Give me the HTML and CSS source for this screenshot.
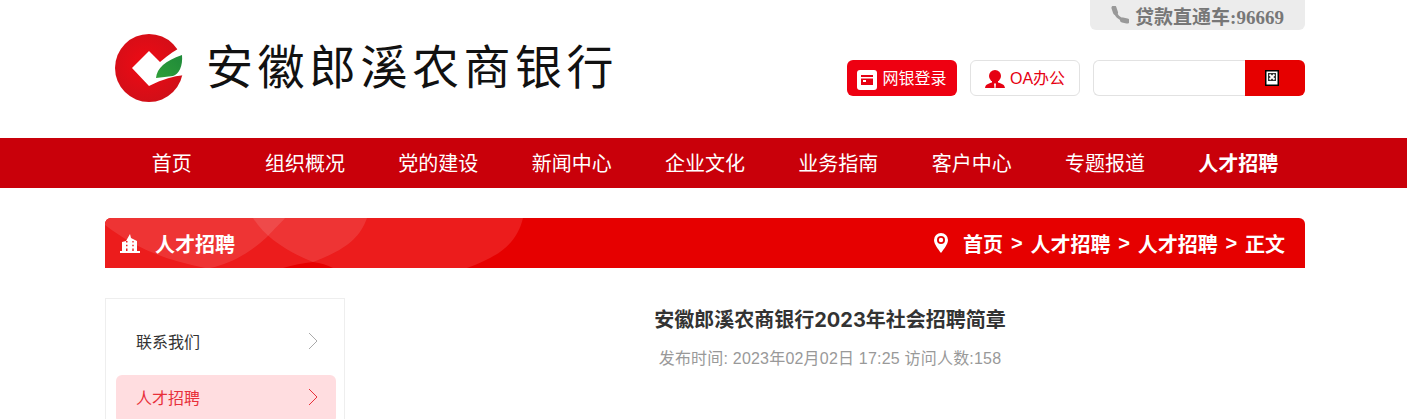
FILE: index.html
```html
<!DOCTYPE html>
<html lang="zh-CN">
<head>
<meta charset="utf-8">
<title>安徽郎溪农商银行</title>
<link rel="stylesheet" href="styles.css">
</head>
<body>
<header class="header">
  <a class="logo" href="#">
    <svg class="logo-mark" viewBox="0 0 68 68" aria-hidden="true">
      <defs>
        <radialGradient id="red" cx="45%" cy="45%" r="60%"><stop offset="0" stop-color="#f00a14"/><stop offset="1" stop-color="#cf0f18"/></radialGradient>
        <linearGradient id="leaf" x1="0" y1="1" x2="1" y2="0"><stop offset="0" stop-color="#2f9e38"/><stop offset="1" stop-color="#1f8a3a"/></linearGradient>
      </defs>
      <circle cx="34" cy="34" r="34" fill="url(#red)"/>
      <path d="M17 34 34 17 45 28C50 24 58 17 70 11V41C60 42 50 44 34 52Z" fill="#fff"/>
      <path d="M41 44C42 34 50 27 67 21 68 32 64 40 58 42 52 43 47 43 41 44Z" fill="url(#leaf)"/>
    </svg>
    <span class="logo-text">安徽郎溪农商银行</span>
  </a>
  <div class="header-side">
    <div class="tel">
      <svg class="tel-icon" viewBox="0 0 18 18" aria-hidden="true"><path d="M4 4C4 9 8.500 13.500 14 14" fill="none" stroke="#999" stroke-width="3"/><path d="M3 2 4.500 6.500M11.500 14 16 15" fill="none" stroke="#999" stroke-width="5" stroke-linecap="round"/></svg>
      <span>贷款直通车:96669</span>
    </div>
    <div class="tools">
      <a class="tool tool-primary" href="#">
        <svg class="tool-icon" viewBox="0 0 20 20" aria-hidden="true"><rect width="20" height="20" rx="3" fill="#fff"/><rect x="4" y="5" width="12" height="10" fill="#e60012"/><rect x="4" y="7" width="12" height="1.500" fill="#fff"/><rect x="6" y="10" width="3" height="2" fill="#fff"/></svg>
        <span class="tool-label">网银登录</span>
      </a>
      <a class="tool tool-outline" href="#">
        <svg class="tool-icon" viewBox="0 0 20 20" aria-hidden="true"><circle cx="10" cy="6" r="6" fill="#e60012"/><path d="M7 10h6v2.500c3 1 6.500 1.500 7 5.500H0c.5-4 4-4.500 7-5.500Z" fill="#e60012"/><path d="M9 13.500h2l-.5 4.500h-1Z" fill="#fff"/></svg>
        <span class="tool-label">OA办公</span>
      </a>
      <form class="search">
        <input class="search-input" type="text" aria-label="搜索">
        <button class="search-btn" type="button" aria-label="搜索">
          <svg class="broken" viewBox="0 0 14 16" aria-hidden="true"><rect width="14" height="16" fill="#000"/><rect x="1.500" y="1.500" width="11" height="13" fill="#fff"/><rect x="3" y="3" width="8" height="8" fill="#333"/><path d="M4.500 4.500l5 5M9.500 4.500l-5 5" stroke="#fff" stroke-width="1.800"/></svg>
        </button>
      </form>
    </div>
  </div>
</header>

<nav class="nav">
  <ul class="nav-list">
    <li><a href="#">首页</a></li>
    <li><a href="#">组织概况</a></li>
    <li><a href="#">党的建设</a></li>
    <li><a href="#">新闻中心</a></li>
    <li><a href="#">企业文化</a></li>
    <li><a href="#">业务指南</a></li>
    <li><a href="#">客户中心</a></li>
    <li><a href="#">专题报道</a></li>
    <li class="active"><a href="#">人才招聘</a></li>
  </ul>
</nav>

<section class="banner">
  <svg class="banner-bg" viewBox="0 0 420 50" aria-hidden="true">
    <path d="M0 0H418C412 25 395 38 362 50H228C222 47 216 45 208 44 198 45 188 47 178 50H0Z" fill="#ec1c1c"/>
    <path d="M0 7C30 30 60 42 100 50H105C130 45 150 30 162 19 170 10 176 5 180 0H0Z" fill="#fff" fill-opacity=".11"/>
    <path d="M148 0C160 20 185 35 208 44 240 32 255 20 262 0Z" fill="#fff" fill-opacity=".11"/>
  </svg>
  <h2 class="banner-title">
    <svg class="banner-icon" viewBox="0 0 20 19" aria-hidden="true"><path d="M0 17H2V8L6 7 10 0 11 4 17 7V17H20V19H0ZM6 7V8.500H7.500V7ZM12.300 7V8.500H13.700V7ZM6 10.700V12.300H7.500V10.700ZM12.300 10.700V12.300H13.700V10.700ZM6 14.500V17H7.500V14.500ZM12.300 14.500V17H13.700V14.500Z" fill="#fff" fill-rule="evenodd"/></svg>
    人才招聘
  </h2>
  <div class="crumbs">
    <svg class="pin" viewBox="0 0 16 20" aria-hidden="true"><path d="M8 0a7 7 0 0 1 7 7c0 4-4 9-7 13C5 16 1 11 1 7a7 7 0 0 1 7-7Z" fill="#fff"/><circle cx="8" cy="7" r="4" fill="#e60000"/><circle cx="8" cy="7" r="2.200" fill="#fff"/></svg>
    <a href="#">首页</a><i>&gt;</i><a href="#">人才招聘</a><i>&gt;</i><a href="#">人才招聘</a><i>&gt;</i><span>正文</span>
  </div>
</section>

<main class="main">
  <aside class="side">
    <a class="side-item" href="#">联系我们<svg class="chev" viewBox="0 0 10 18" aria-hidden="true"><path d="M1 1l8 8-8 8" fill="none" stroke="currentColor"/></svg></a>
    <a class="side-item current" href="#">人才招聘<svg class="chev" viewBox="0 0 10 18" aria-hidden="true"><path d="M1 1l8 8-8 8" fill="none" stroke="currentColor"/></svg></a>
  </aside>
  <article class="article">
    <h1 class="article-title">安徽郎溪农商银行2023年社会招聘简章</h1>
    <p class="article-meta">发布时间: 2023年02月02日 17:25 访问人数:158</p>
  </article>
</main>
</body>
</html>
```

FILE: styles.css
```css
* { box-sizing: border-box; }
html, body { margin: 0; padding: 0; height: 419px; overflow: hidden; background: #fff; }
body { font-family: "Liberation Sans", "Noto Sans CJK SC", sans-serif; color: #333; }
a { color: inherit; text-decoration: none; }
ul { list-style: none; margin: 0; padding: 0; }

.header { display: flex; justify-content: space-between; width: 1200px; height: 138px; margin-left: 105px; }
.logo { display: flex; align-items: center; height: 68px; margin: 34px 0 0 10px; color: #111; }
.logo-mark { width: 68px; height: 68px; flex: none; }
.logo-text { margin-left: 23px; font-size: 47px; line-height: 68px; letter-spacing: 4.5px; font-weight: 400; }
.header-side { display: flex; flex-direction: column; align-items: flex-end; }
.tel { display: flex; align-items: center; justify-content: center; gap: 6px; width: 215px; height: 30px; background: #ececec; border-radius: 0 0 6px 6px; color: #777; font-family: "Liberation Serif", "Noto Sans CJK SC", serif; font-size: 19px; font-weight: 700; }
.tel-icon { width: 18px; height: 18px; }
.tools { display: flex; gap: 13px; margin-top: 30px; }
.tool { display: flex; align-items: center; justify-content: center; gap: 5px; width: 110px; height: 36px; border-radius: 6px; font-size: 16px; }
.tool-primary { background: #ee0011; color: #fff; }
.tool-outline { background: #fff; color: #e60012; border: 1px solid #e2e2e2; }
.tool-icon { width: 20px; height: 20px; margin-top: 3px; }
.tool-label { margin-bottom: 2px; }
.search { display: flex; width: 212px; height: 36px; }
.search-input { flex: 1; min-width: 0; border: 1px solid #e2e2e2; border-right: 0; border-radius: 6px 0 0 6px; outline: 0; background: #fff; }
.search-btn { display: flex; align-items: center; justify-content: center; width: 60px; padding: 0 6px 0 0; border: 0; border-radius: 0 6px 6px 0; background: #e60000; }
.broken { width: 14px; height: 16px; }

.nav { height: 50px; background: #c9000a; }
.nav-list { display: grid; grid-template-columns: repeat(9, 1fr); width: 1200px; height: 50px; margin-left: 105px; }
.nav-list li { padding-top: 1px; text-align: center; font-size: 20px; line-height: 50px; color: #fff; }
.nav-list .active { font-weight: 700; }

.banner { position: relative; display: flex; align-items: center; justify-content: space-between; width: 1200px; height: 50px; margin: 30px 0 0 105px; padding: 0 20px 0 15px; background: #e60000; border-radius: 6px 6px 0 0; overflow: hidden; color: #fff; font-size: 20px; font-weight: 700; }
.banner-bg { position: absolute; left: 0; top: 0; width: 420px; height: 50px; }
.banner-title { position: relative; display: flex; align-items: center; gap: 15px; margin: 0; font-size: 20px; }
.banner-icon { width: 20px; height: 19px; }
.crumbs { position: relative; display: flex; align-items: center; }
.pin { width: 16px; height: 20px; margin-right: 14px; }
.crumbs i { width: 27.3px; text-align: center; font-style: normal; }

.main { display: flex; width: 1200px; margin: 30px 0 0 105px; }
.side { display: flex; flex-direction: column; gap: 8px; flex: none; width: 240px; height: 200px; padding: 20px 8px 0 10px; border: 1px solid #eee; }
.side-item { display: flex; align-items: center; justify-content: space-between; height: 48px; padding: 0 18px 4px 20px; border-radius: 6px; font-size: 16px; color: #333; }
.side-item .chev { color: #aaa; }
.side-item.current { background: #ffdde0; color: #e8303a; }
.side-item.current .chev { color: #e8303a; }
.chev { width: 10px; height: 18px; }
.article { flex: 1; margin-left: 10px; text-align: center; }
.article-title { margin: 7px 0 0; font-family: Inter, "Noto Sans CJK SC", sans-serif; font-size: 20px; line-height: 30px; font-weight: 700; color: #333; }
.article-meta { margin: 12px 0 0; font-size: 16px; line-height: 24px; letter-spacing: .2px; color: #999; }
```
